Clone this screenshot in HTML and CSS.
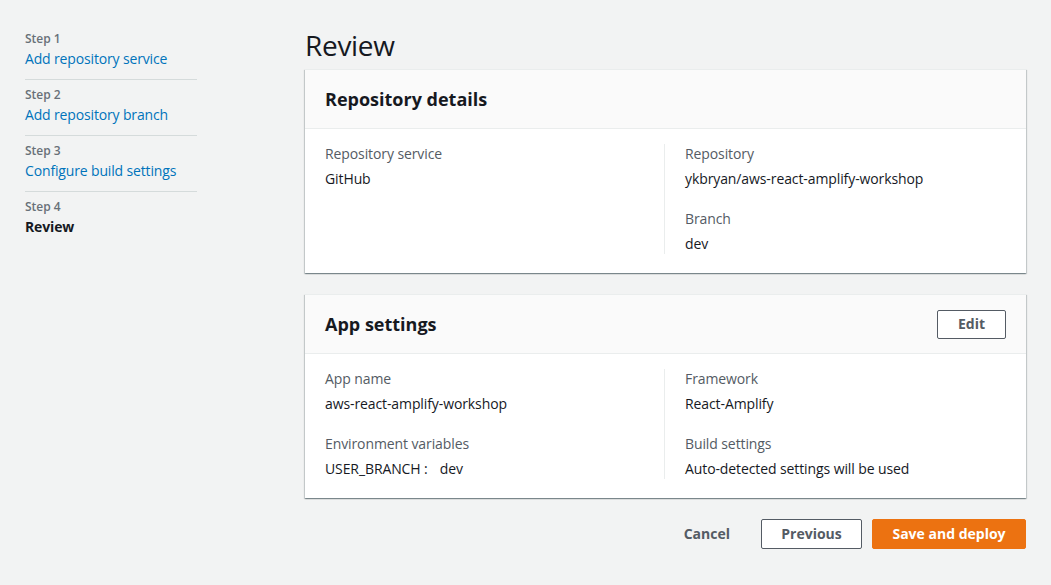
FILE: index.html
```html
<!DOCTYPE html>
<html lang="en">
<head>
<meta charset="utf-8">
<title>Review</title>
<link rel="stylesheet" href="styles.css">
</head>
<body>
<div class="page">
  <nav class="steps">
    <div class="step">
      <div class="step-label">Step 1</div>
      <a class="step-link" href="#">Add repository service</a>
    </div>
    <div class="step">
      <div class="step-label">Step 2</div>
      <a class="step-link" href="#">Add repository branch</a>
    </div>
    <div class="step">
      <div class="step-label">Step 3</div>
      <a class="step-link" href="#">Configure build settings</a>
    </div>
    <div class="step last">
      <div class="step-label">Step 4</div>
      <div class="step-current">Review</div>
    </div>
  </nav>
  <main class="main">
    <h1 class="title">Review</h1>
    <section class="card">
      <div class="card-header">
        <h2 class="card-title">Repository details</h2>
      </div>
      <div class="card-body">
        <div class="col">
          <div class="field">
            <div class="label">Repository service</div>
            <div class="value">GitHub</div>
          </div>
        </div>
        <div class="col col-right">
          <div class="field">
            <div class="label">Repository</div>
            <div class="value">ykbryan/aws-react-amplify-workshop</div>
          </div>
          <div class="field">
            <div class="label">Branch</div>
            <div class="value">dev</div>
          </div>
        </div>
      </div>
    </section>
    <section class="card">
      <div class="card-header">
        <h2 class="card-title">App settings</h2>
        <button class="btn btn-edit" type="button">Edit</button>
      </div>
      <div class="card-body">
        <div class="col">
          <div class="field">
            <div class="label">App name</div>
            <div class="value">aws-react-amplify-workshop</div>
          </div>
          <div class="field">
            <div class="label">Environment variables</div>
            <div class="value">USER_BRANCH :<span class="env-val">dev</span></div>
          </div>
        </div>
        <div class="col col-right">
          <div class="field">
            <div class="label">Framework</div>
            <div class="value">React-Amplify</div>
          </div>
          <div class="field">
            <div class="label">Build settings</div>
            <div class="value">Auto-detected settings will be used</div>
          </div>
        </div>
      </div>
    </section>
    <div class="actions">
      <button class="btn btn-link" type="button">Cancel</button>
      <button class="btn btn-normal" type="button">Previous</button>
      <button class="btn btn-primary" type="button">Save and deploy</button>
    </div>
  </main>
</div>
</body>
</html>
```
FILE: styles.css
```css
* { box-sizing: border-box; }
html, body {
  margin: 0;
  padding: 0;
  background: #f2f3f3;
  font-family: "Open Sans", "Liberation Sans", Arial, sans-serif;
  color: #16191f;
  font-size: 14px;
}
.page {
  display: flex;
  align-items: flex-start;
  padding: 0 25px 0 25px;
}
.steps {
  width: 172px;
  flex: none;
  padding-top: 24px;
  margin-right: 108px;
}
.step {
  padding: 7px 0 10px;
  border-bottom: 1px solid #d5dbdb;
}
.step.last { border-bottom: none; }
.step-label {
  font-size: 12px;
  line-height: 16px;
  color: #687078;
  font-weight: 600;
}
.step-link, .step-current {
  display: block;
  margin-top: 2px;
  font-size: 14px;
  line-height: 20px;
  color: #0073bb;
  text-decoration: none;
  letter-spacing: -0.15px;
}
.step-current {
  color: #16191f;
  font-weight: 700;
}
.main {
  flex: 1;
  padding-top: 27px;
}
.title {
  margin: 0 0 6px 0;
  font-size: 28px;
  line-height: 36px;
  font-weight: 400;
  letter-spacing: -0.3px;
  color: #16191f;
}
.card {
  background: #fff;
  border-top: 1px solid #eaeded;
  box-shadow: 0 1px 1px 0 rgba(0, 28, 36, 0.3), 1px 1px 1px 0 rgba(0, 28, 36, 0.15), -1px 1px 1px 0 rgba(0, 28, 36, 0.15);
  margin-bottom: 21px;
}
.card-header {
  height: 59px;
  background: #fafafa;
  border-bottom: 1px solid #eaeded;
  display: flex;
  align-items: center;
  justify-content: space-between;
  padding: 0 20px;
}
.card-title {
  margin: 0;
  font-size: 18px;
  line-height: 22px;
  font-weight: 700;
  color: #16191f;
}
.card-body {
  display: grid;
  grid-template-columns: 339px 1fr;
  padding: 15px 20px 19px;
  letter-spacing: -0.1px;
}
.col { padding-right: 20px; }
.col-right {
  border-left: 1px solid #eaeded;
  padding-left: 20px;
  padding-right: 0;
}
.field + .field { margin-top: 20px; }
.label {
  font-size: 14px;
  line-height: 20px;
  color: #545b64;
}
.value {
  margin-top: 5px;
  font-size: 14px;
  line-height: 20px;
  color: #16191f;
}
.env-val { margin-left: 12px; }
.btn {
  font-family: inherit;
  font-size: 14px;
  font-weight: 700;
  line-height: 20px;
  border-radius: 2px;
  cursor: pointer;
}
.btn-edit {
  background: #fff;
  border: 1px solid #545b64;
  color: #545b64;
  padding: 3px 0 4px;
  width: 69px;
}
.actions {
  display: flex;
  justify-content: flex-end;
  align-items: center;
}
.btn-link {
  background: none;
  border: none;
  color: #545b64;
  padding: 4px 0;
  margin-right: 31px;
}
.btn-normal {
  background: #fff;
  border: 1px solid #545b64;
  color: #545b64;
  width: 101px;
  height: 30px;
  padding: 0;
  margin-right: 10px;
}
.btn-primary {
  background: #ec7211;
  border: 1px solid #ec7211;
  color: #fff;
  width: 154px;
  height: 30px;
  padding: 0;
}
```
